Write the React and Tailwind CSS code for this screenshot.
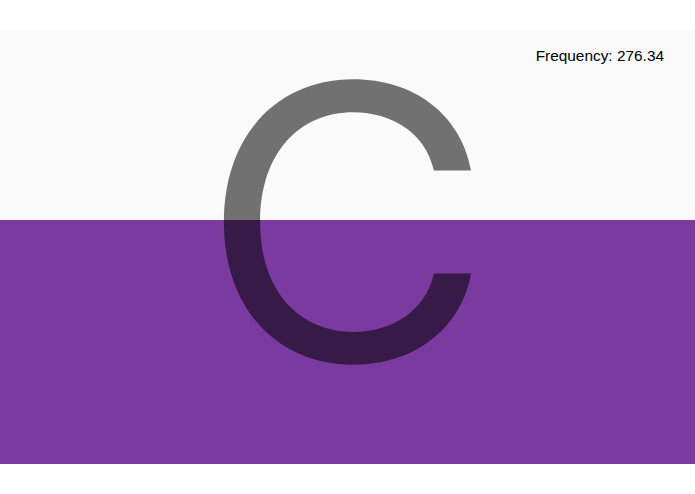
import React from "react";

export default function App() {
  const frequency = 276.34;
  const note = "C";

  return (
    <div
      className="w-full h-[494px] bg-white pt-[30px] overflow-hidden"
      style={{ fontFamily: "'Liberation Sans', Arial, sans-serif" }}
    >
      <div className="relative flex flex-col">
        <div className="h-[190px] bg-[#fafafa]" />
        <div className="h-[244px] bg-[#7b3a9f]" />

        {/* note letter sits over both halves */}
        <div className="absolute inset-x-0 top-[1px] flex justify-center pr-[1px] pointer-events-none">
          <span
            className="inline-block scale-x-105 text-[382px] leading-none text-black/55"
            style={{ fontFamily: "Inter, 'Liberation Sans', sans-serif" }}
          >
            {note}
          </span>
        </div>

        <div className="absolute top-[17px] right-[31px] text-[15.4px] leading-[18px] text-black">
          Frequency: {frequency}
        </div>
      </div>
    </div>
  );
}
